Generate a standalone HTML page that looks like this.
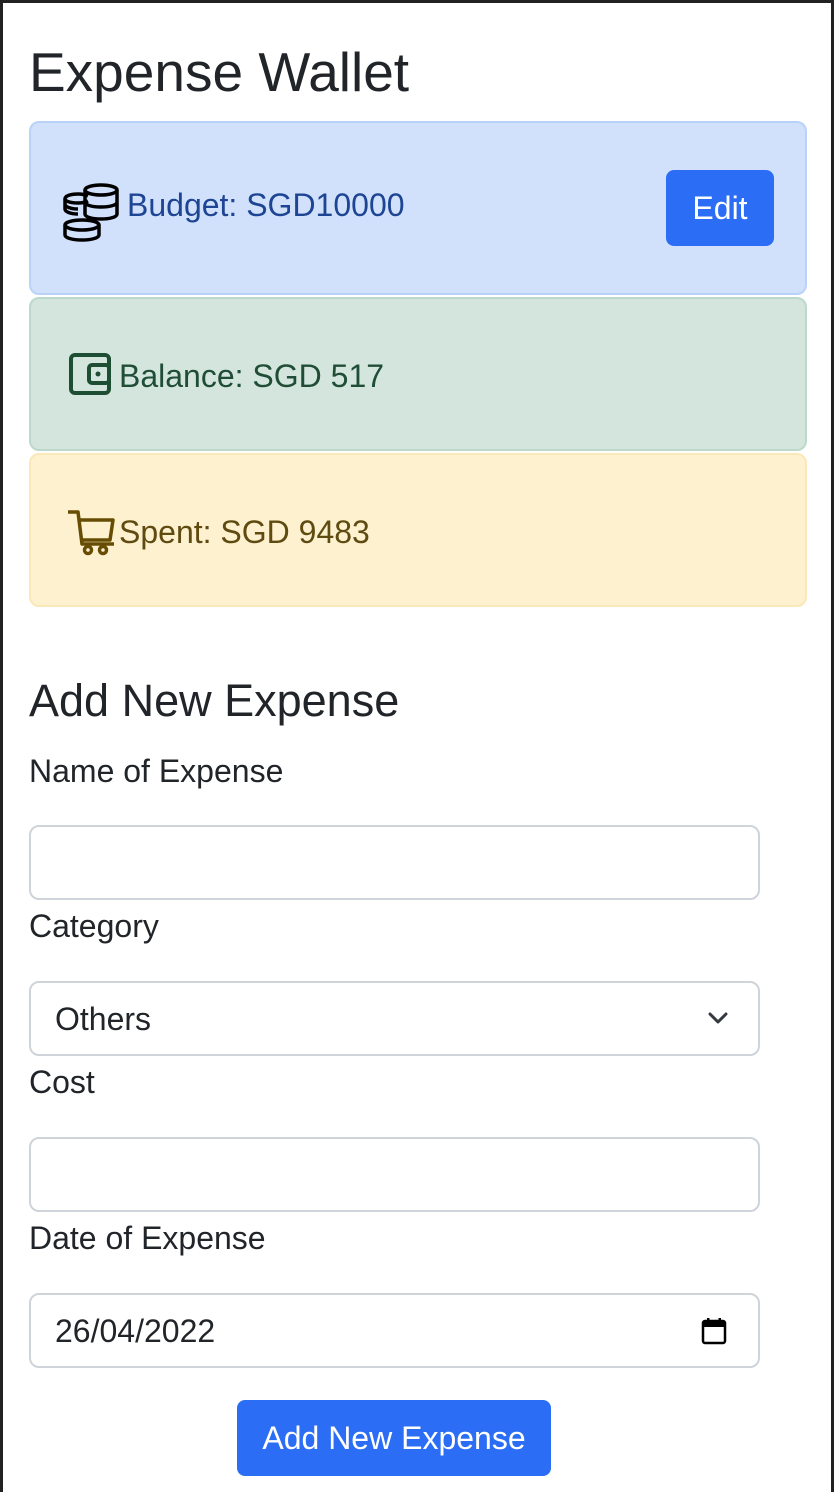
<!DOCTYPE html>
<html><head><meta charset="utf-8"><style>
*{box-sizing:border-box;margin:0;padding:0}
html,body{width:834px;height:1492px;overflow:hidden;background:#fff}
body{font-family:"Liberation Sans",sans-serif;color:#212529;position:relative;border-top:3px solid #222;border-left:3px solid #222;border-right:3px solid #222}
.a{position:absolute;white-space:nowrap}
.t{position:absolute;white-space:nowrap;height:40px;line-height:40px;font-size:32px}
.alert{position:absolute;left:26px;width:778px;border:2px solid;border-radius:10px}
.inp{position:absolute;left:26px;width:731px;height:75px;border:2px solid #ced4da;border-radius:10px;background:#fff}
.btn{position:absolute;background:#2b6ef5;color:#fff;border-radius:8px;font-size:32px;text-align:center}
</style></head><body>
<div class="a" style="left:26px;top:39px;height:60px;line-height:60px;font-size:55px">Expense Wallet</div>

<div class="alert" style="top:118px;height:174px;background:#d2e1fb;border-color:#b9d3f8"></div>
<svg class="a" style="left:59px;top:179px" width="60" height="60" viewBox="0 0 60 60" fill="none" stroke="#000" stroke-width="3.5">
<path d="M26 14c-2-1-6-2-10-2-8 0-13 2-13 5v10c0 3 6 5 13 5M3 22c0 3 6 5 13 5"/>
<path d="M3 17c0 2 5 4 13 4 4 0 8-1 10-2"/>
<path d="M23 8v24c0 3 7 5 16 5s16-2 16-5V8M23 20c0 3 7 5 16 5s16-2 16-5"/>
<ellipse cx="39" cy="8" rx="16" ry="5" fill="#d2e1fb"/>
<path d="M3 43v10c0 3 8 5 17 5s17-2 17-5V43" fill="#d2e1fb"/>
<ellipse cx="20" cy="43" rx="17" ry="5" fill="#d2e1fb"/>
</svg>
<div class="t" style="left:124px;top:182px;color:#1d4593">Budget: SGD10000</div>
<div class="btn" style="left:663px;top:167px;width:108px;height:76px;line-height:76px">Edit</div>

<div class="alert" style="top:294px;height:154px;background:#d4e5de;border-color:#bcd9cc"></div>
<svg class="a" style="left:65px;top:349px" width="46" height="46" viewBox="0 0 46 46" fill="none" stroke="#1d4d33" stroke-width="4">
<rect x="3" y="3" width="38" height="38" rx="4"/>
<rect x="21" y="13" width="20" height="18" rx="3"/>
<circle cx="30" cy="22" r="2.5" fill="#1d4d33" stroke="none"/>
</svg>
<div class="t" style="left:116px;top:353px;color:#1f4d35">Balance: SGD 517</div>

<div class="alert" style="top:450px;height:154px;background:#fdf1d0;border-color:#fbe8b8"></div>
<svg class="a" style="left:63px;top:506px" width="52" height="48" viewBox="0 0 52 48" fill="none" stroke="#664d03" stroke-width="3.5" stroke-linejoin="round">
<path d="M2 3h10l4 32h32"/>
<path d="M13 11h34l-3 20H17"/>
<circle cx="22" cy="41" r="3.5"/><circle cx="37" cy="41" r="3.5"/>
</svg>
<div class="t" style="left:116px;top:509px;color:#5f4a10">Spent: SGD 9483</div>

<div class="a" style="left:26px;top:673px;height:50px;line-height:50px;font-size:45px">Add New Expense</div>
<div class="t" style="left:26px;top:748px">Name of Expense</div>
<div class="inp" style="top:822px"></div>
<div class="t" style="left:26px;top:903px">Category</div>
<div class="inp" style="top:978px"></div>
<div class="t" style="left:52px;top:996px">Others</div>
<svg class="a" style="left:704px;top:1008px" width="22" height="14" viewBox="0 0 22 14" fill="none" stroke="#343a40" stroke-width="3" stroke-linecap="round" stroke-linejoin="round"><path d="M3 3l8 8 8-8"/></svg>
<div class="t" style="left:26px;top:1059px">Cost</div>
<div class="inp" style="top:1134px"></div>
<div class="t" style="left:26px;top:1215px">Date of Expense</div>
<div class="inp" style="top:1290px"></div>
<div class="t" style="left:52px;top:1308px">26/04/2022</div>
<svg class="a" style="left:698px;top:1313px" width="26" height="30" viewBox="0 0 26 30"><rect x="2" y="5" width="22" height="22" rx="2" fill="none" stroke="#000" stroke-width="2.5"/><rect x="2" y="5" width="22" height="6" fill="#000"/><rect x="6" y="2" width="2.5" height="5" fill="#000"/><rect x="17.5" y="2" width="2.5" height="5" fill="#000"/></svg>
<div class="btn" style="left:234px;top:1397px;width:314px;height:76px;line-height:76px">Add New Expense</div>
</body></html>
